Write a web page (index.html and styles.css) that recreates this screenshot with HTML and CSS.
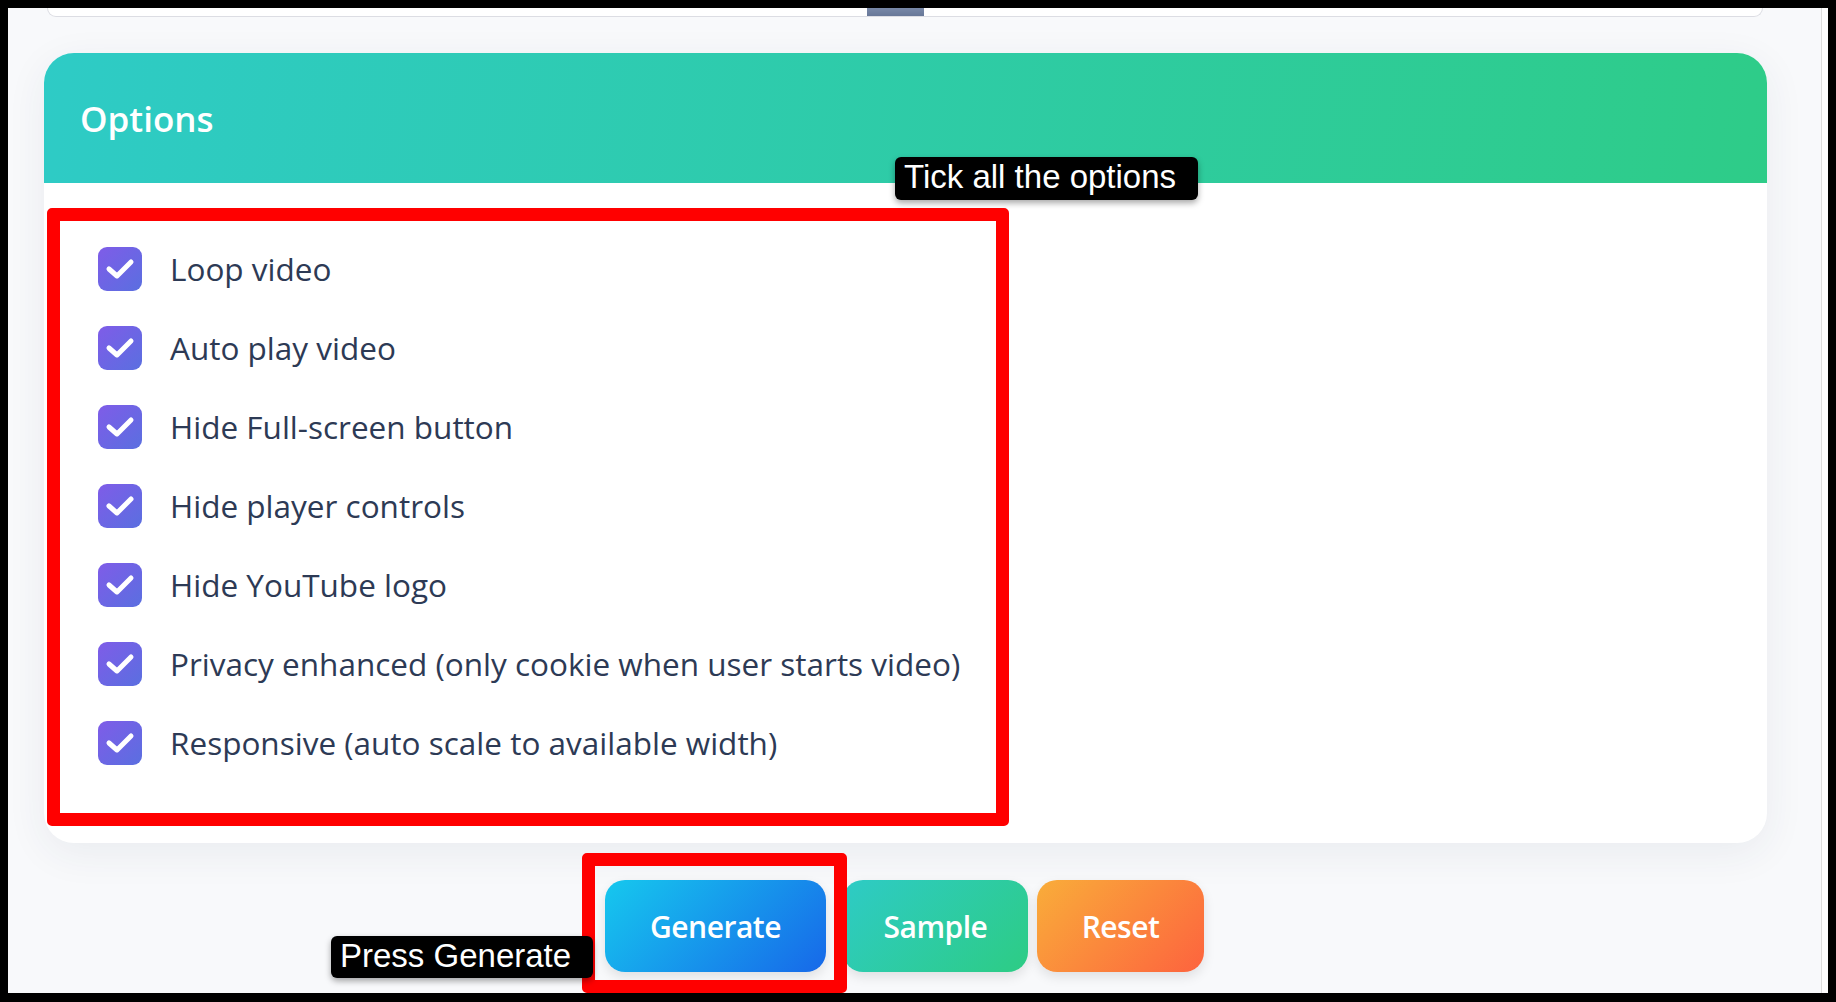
FILE: index.html
```html
<!DOCTYPE html>
<html lang="en">

<head>
    <meta charset="UTF-8">
    <meta name="viewport" content="width=device-width, initial-scale=1.0">
    <title>Embed Options</title>
    <link rel="stylesheet" href="styles.css">
</head>

<body>

    <div class="frame">

        <!-- Bottom edge of the card above -->
        <div class="prev-card">
            <div class="prev-tab"></div>
        </div>

        <!-- Options card -->
        <div class="card">
            <div class="card-head">Options</div>

            <div class="options mark">
                <label class="option">
                    <span class="check"><svg viewBox="0 0 44 44"><polyline points="11,22 19,29 33,15" /></svg></span>
                    Loop video
                </label>
                <label class="option">
                    <span class="check"><svg viewBox="0 0 44 44"><polyline points="11,22 19,29 33,15" /></svg></span>
                    Auto play video
                </label>
                <label class="option">
                    <span class="check"><svg viewBox="0 0 44 44"><polyline points="11,22 19,29 33,15" /></svg></span>
                    Hide Full-screen button
                </label>
                <label class="option">
                    <span class="check"><svg viewBox="0 0 44 44"><polyline points="11,22 19,29 33,15" /></svg></span>
                    Hide player controls
                </label>
                <label class="option">
                    <span class="check"><svg viewBox="0 0 44 44"><polyline points="11,22 19,29 33,15" /></svg></span>
                    Hide YouTube logo
                </label>
                <label class="option">
                    <span class="check"><svg viewBox="0 0 44 44"><polyline points="11,22 19,29 33,15" /></svg></span>
                    Privacy enhanced (only cookie when user starts video)
                </label>
                <label class="option">
                    <span class="check"><svg viewBox="0 0 44 44"><polyline points="11,22 19,29 33,15" /></svg></span>
                    Responsive (auto scale to available width)
                </label>
            </div>

            <!-- Annotation -->
            <div class="tip tip-options">Tick all the options</div>
        </div>

        <!-- Buttons -->
        <div class="actions">
            <button class="btn btn-generate">Generate</button>
            <button class="btn btn-sample">Sample</button>
            <button class="btn btn-reset">Reset</button>

            <!-- Annotations -->
            <div class="mark mark-generate"></div>
            <div class="tip tip-generate">Press Generate</div>
        </div>

    </div>

</body>

</html>
```

FILE: styles.css
```css
/* Page */
body {
    margin: 0;
    background: #000;
    overflow: hidden;
    font-family: "Open Sans", "Noto Sans", sans-serif;
}

.frame {
    margin: 8px 8px 9px 8px;
    height: 985px;
    background: #f8f9fb;
    box-shadow: inset -6px 0 0 #fdfdfd, inset -7px 0 0 #dcdcdc;
    overflow: hidden;
}

/* Card above (only its bottom edge shows) */
.prev-card {
    margin: 0 65px 0 39px;
    background: #fff;
    border: 1px solid #dcdde3;
    border-top: none;
    border-radius: 0 0 18px 18px;
}

.prev-tab {
    margin-left: 819px;
    width: 57px;
    height: 8px;
    background: linear-gradient(180deg, #7888a8, #687898);
}

/* Options card */
.card {
    position: relative;
    margin: 36px 0 0 36px;
    width: 1723px;
    height: 790px;
    background: #fff;
    border-radius: 30px;
    box-shadow: 0 10px 40px rgba(40, 50, 90, 0.07);
}

.card-head {
    display: flex;
    align-items: center;
    height: 130px;
    padding-left: 36px;
    border-radius: 30px 30px 0 0;
    background: linear-gradient(100deg, #2ecbc6, #2ecc88);
    color: #fff;
    font-size: 35px;
    font-weight: 600;
}

/* Red annotation boxes */
.mark {
    border: 13px solid #ff0000;
    border-radius: 5px;
    box-sizing: border-box;
}

.options {
    margin: 25px 0 0 3px;
    width: 962px;
    padding: 8px 0 31px 38px;
}

.option {
    display: flex;
    align-items: center;
    gap: 28px;
    height: 79px;
    font-size: 31.5px;
    font-weight: 500;
    color: #2d3a55;
}

.check {
    width: 44px;
    height: 44px;
    border-radius: 9px;
    background: linear-gradient(135deg, #7f5ce8, #5a6fe0);
}

.check svg {
    display: block;
    width: 44px;
    height: 44px;
}

.check polyline {
    fill: none;
    stroke: #fff;
    stroke-width: 5;
    stroke-linecap: round;
    stroke-linejoin: round;
}

/* Black annotation labels */
.tip {
    position: absolute;
    height: 43px;
    line-height: 40px;
    padding: 0 22px 0 9px;
    background: #000;
    color: #fff;
    font-family: "Liberation Sans", Arial, sans-serif;
    font-size: 33px;
    border-radius: 6px;
    box-shadow: 0 3px 6px rgba(0, 0, 0, 0.35);
    white-space: nowrap;
}

.tip-options {
    left: 851px;
    top: 104px;
}

/* Buttons */
.actions {
    position: relative;
    display: flex;
    margin-top: 37px;
    padding-left: 597px;
}

.btn {
    height: 92px;
    padding: 0;
    border: none;
    border-radius: 20px;
    color: #fff;
    font-family: "Open Sans", "Noto Sans", sans-serif;
    font-size: 30px;
    font-weight: 600;
    letter-spacing: -0.5px;
    box-shadow: 0 5px 12px rgba(0, 0, 0, 0.1);
}

.btn-generate {
    width: 221px;
    margin-right: 17px;
    background: linear-gradient(135deg, #16c8ee, #1768e9);
}

.btn-sample {
    width: 185px;
    margin-right: 9px;
    background: linear-gradient(135deg, #2ecbc6, #2dcc84);
}

.btn-reset {
    width: 167px;
    background: linear-gradient(135deg, #f9ad3a, #fd633e);
}

.mark-generate {
    position: absolute;
    left: 574px;
    top: -27px;
    width: 265px;
    height: 140px;
}

.tip-generate {
    left: 323px;
    top: 56px;
    height: 42px;
    line-height: 39px;
}
```
